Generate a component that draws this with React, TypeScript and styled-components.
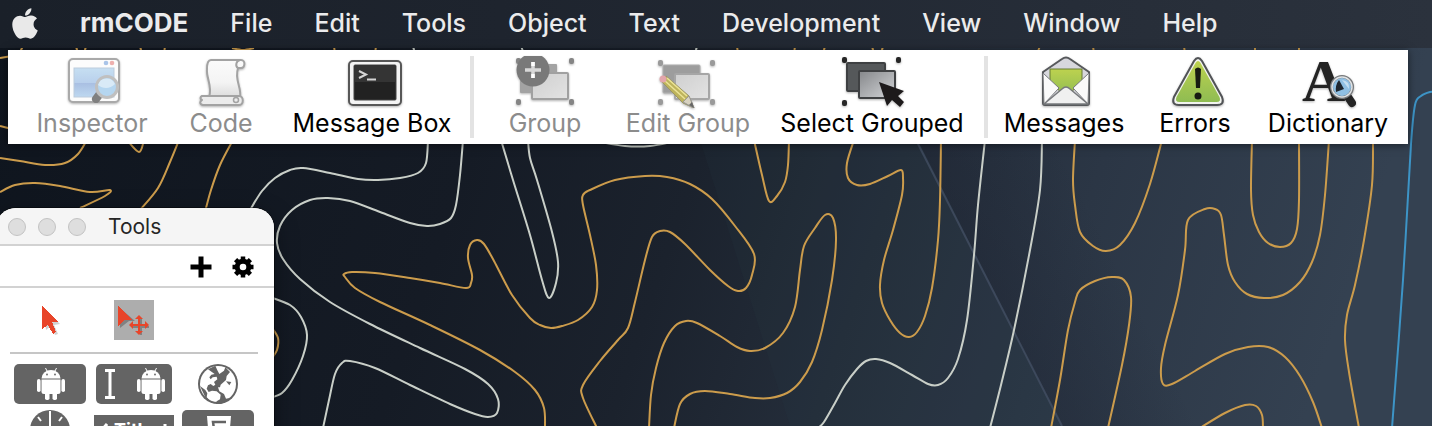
import React from "react";
import styled, { createGlobalStyle, css } from "styled-components";
import { FaApple } from "react-icons/fa";

const Global = createGlobalStyle`
  * { box-sizing: border-box; }
  body { margin: 0; overflow: hidden; background: #10161d; }
  button { font: inherit; color: inherit; background: none; border: 0; padding: 0; cursor: default; }
`;

const Desktop = styled.div`
  position: relative;
  height: 100vh;
  overflow: hidden;
  font-family: Inter, "Liberation Sans", sans-serif;
`;

const Wallpaper = styled.svg`
  position: absolute;
  inset: 0;
  width: 100%;
  height: 100%;
`;

const Layer = styled.div`
  position: relative;
`;

const MenuBar = styled.nav`
  display: flex;
  align-items: center;
  gap: 42px;
  height: 48px;
  padding: 0 12px 2px;
  background: linear-gradient(90deg, #1a2029, #1e242e 35%, #262d38 75%, #2b323d);
  color: #ebebec;
`;

const AppleButton = styled.button`
  display: flex;
  justify-content: center;
  width: 26px;
  font-size: 37px;
  color: #e9e9e9;
`;

const MenuItem = styled.button<{ $app?: boolean }>`
  font-size: ${(p) => (p.$app ? 26 : 25)}px;
  line-height: 32px;
  font-weight: ${(p) => (p.$app ? 700 : 500)};
  white-space: nowrap;
`;

const Toolbar = styled.div`
  display: flex;
  margin: 2px 24px 0 8px;
  padding: 6px 8px;
  height: 94px;
  background: #fff;
  box-shadow: 0 1px 8px rgba(0, 0, 0, 0.5);
`;

const ToolGroup = styled.div`
  display: flex;
  padding: 0 10px;
  & + & { border-left: 4px solid #e3e3e3; }
`;

const ToolButton = styled.button<{ $width: number }>`
  display: flex;
  flex-direction: column;
  align-items: center;
  width: ${(p) => p.$width}px;
  font-size: 25px;
  line-height: 30px;
  color: #000;
  white-space: nowrap;
  &:disabled { color: #8c8c8c; }
`;

const ToolIcon = styled.svg`
  flex: none;
  width: 64px;
  height: 52px;
  filter: drop-shadow(0 1px 1px rgba(0, 0, 0, 0.3));
`;

const Palette = styled.section`
  width: 278px;
  margin: 64px 0 0 -4px;
  padding-left: 4px;
  border-radius: 20px 20px 0 0;
  background: #fff;
  overflow: hidden;
  box-shadow: 0 0 0 1px rgba(0, 0, 0, 0.4), 0 8px 24px rgba(0, 0, 0, 0.4);
`;

const TitleBar = styled.header`
  display: flex;
  align-items: center;
  gap: 12px;
  height: 38px;
  margin-left: -4px;
  padding: 2px 0 0 12px;
  background: #f5f5f5;
  border-bottom: 2px solid #d2d2d2;
`;

const WindowDot = styled.button`
  width: 18px;
  height: 18px;
  border-radius: 50%;
  background: #dedede;
  border: 1px solid #c3c3c3;
`;

const Title = styled.h1`
  margin: 0 0 0 10px;
  font-size: 21px;
  line-height: 28px;
  font-weight: 400;
  color: #262626;
`;

const ActionRow = styled.div`
  display: flex;
  justify-content: flex-end;
  align-items: center;
  gap: 20px;
  height: 42px;
  margin-left: -4px;
  padding: 2px 20px 0 0;
  border-bottom: 2px solid #d2d2d2;
  svg { display: block; width: 22px; height: 22px; }
`;

const IconGrid = styled.div<{ $divided?: boolean }>`
  display: grid;
  grid-template-columns: repeat(3, 84px);
  justify-items: center;
  row-gap: 6px;
  margin: 0 16px 0 10px;
  padding: 10px 0;
  ${(p) => p.$divided && css`
    padding: 12px 0;
    border-bottom: 2px solid #c6c6c6;
  `}
`;

const Cell = styled.button<{ $selected?: boolean }>`
  display: block;
  width: 40px;
  height: 40px;
  margin-left: -4px;
  background: ${(p) => (p.$selected ? "#adadad" : "transparent")};
  svg { display: block; width: 40px; height: 40px; }
`;

const Widget = styled.button<{ $width: number }>`
  display: flex;
  align-items: center;
  justify-content: center;
  gap: 22px;
  width: ${(p) => p.$width}px;
  height: 40px;
  margin-left: -4px;
  padding-left: 2px;
  border-radius: 5px;
  background: #646464;
  svg { display: block; height: 32px; }
`;

const NavWidget = styled.button`
  display: flex;
  align-items: flex-start;
  gap: 6px;
  align-self: end;
  width: 80px;
  height: 35px;
  margin-left: -4px;
  padding: 4px 6px;
  background: #646464;
  color: #fff;
  font-size: 18px;
  line-height: 22px;
  font-weight: 700;
  svg { flex: none; margin-top: 4px; }
`;

type Point = [number, number];

/* Smooth curve through every point of a flat "x,y x,y" list. */
const curve = (list: string) => {
  const p = list.split(" ").map((s) => s.split(",").map(Number) as Point);
  let d = `M${p[0]}`;
  for (let i = 0; i < p.length - 1; i++) {
    const a = p[i - 1] ?? p[i];
    const b = p[i];
    const c = p[i + 1];
    const e = p[i + 2] ?? c;
    d += `C${b[0] + (c[0] - a[0]) / 6},${b[1] + (c[1] - a[1]) / 6} ${c[0] - (e[0] - b[0]) / 6},${c[1] - (e[1] - b[1]) / 6} ${c}`;
  }
  return d;
};

const paleLines = [
  "250,210 262,191 275,178 290,170 303,168 330,173 358,179 378,180 400,178 418,173 426,163 428,140",
  "463,140 460,175 456,205 451,218 440,224 427,226 410,223 380,212 350,201 328,198 310,200 292,210 280,226 277,243 283,259 300,279 330,302 370,324 420,348 465,369 488,384 498,399 497,413 488,417 475,414 450,404 410,385 375,368 350,361 342,363 335,374 329,400 323,428",
  "501,140 513,180 530,235 542,280 549,298 556,283 558,262 552,232 537,180 530,158 528,140",
  "270,297 290,305 301,317 307,335 303,356 292,380 282,393 270,398",
  "600,142 625,146 650,146 672,142",
  "818,428 824,422 835,403 845,385 857,369 866,361 876,359 890,363 912,375 928,384 938,385 948,378 958,359 967,320 974,255 978,205 985,140",
  "1042,140 1040,190 1030,250 1014,330 1001,385 990,428",
  "413,46 415,54",
  "521,46 524,54",
  "697,46 695,54",
];

const goldLines = [
  "272,328 278,338 277,350 272,358",
  "545,428 544,408 535,390 515,372 480,350 430,325 380,302 355,288 345,277 344,274 352,272 375,273 410,278 440,283 466,288 471,283 472,275 468,258 470,245 477,240 484,244 494,261 512,295 530,318 540,325 551,328 562,326 578,320 592,307 597,290 596,265 590,235 583,205 583,195 590,190 615,180 645,176 667,177 690,184 712,199 735,226 754,254 752,275 746,288 738,291 728,286 710,270 685,244 670,232 660,231 652,237 645,260 635,302 628,328 618,340 600,361 583,385 583,398 597,428",
  "649,428 651,395 656,368 664,343 675,326 686,321 697,323 720,336 737,347 750,351 765,348 783,333 795,307 800,270 804,246 815,228 825,215 833,218 836,240 832,280 822,330 812,362 800,382 787,393 770,398 755,398 730,394 705,391 690,394 680,404 674,428",
  "754,140 762,175 769,201 777,196 785,182 788,165 789,140",
  "854,140 847,163 848,178 857,185 870,184 888,176 901,170 903,178 902,195 893,230 884,260 880,285 882,303 890,320 900,333 909,337 917,332 925,316 932,288 938,240 940,200 941,140",
  "1075,140 1073,180 1075,205 1080,232 1093,246 1106,251 1120,245 1135,223 1150,184 1162,140",
  "1051,428 1060,380 1068,330 1075,302 1080,290 1095,281 1112,277 1124,280 1131,297 1129,325 1122,365 1108,428",
  "1252,140 1251,190 1253,215 1259,232 1268,243 1280,247 1291,243 1297,229 1299,200 1299,140",
  "1329,140 1325,195 1320,235 1312,262 1300,282 1283,295 1264,298 1247,294 1235,282 1228,265 1224,235 1221,215 1215,209 1205,209 1188,220 1185,250 1178,295 1165,345 1161,368 1163,384 1172,384 1195,371 1225,354 1248,347 1268,347 1285,357 1300,376 1313,402 1322,428",
  "1373,140 1372,185 1364,240 1355,285 1347,315 1345,340 1349,372 1359,428",
  "1200,428 1225,413 1245,405 1256,406 1262,415 1263,428",
  "0,158 20,161 45,165 65,163 78,154 87,140",
  "0,192 15,185 35,183 60,186 90,192 110,190 105,196 80,208",
  "127,140 139,152 144,140",
  "179,140 170,162 158,188 140,210",
  "233,140 220,165 211,190 205,212",
  "0,58 12,56",
  "0,126 12,129",
  "23,46 19,54", "76,46 78,54", "86,46 84,54", "140,46 142,54", "165,46 164,54",
  "232,48 243,50 254,48", "334,46 335,54", "376,46 375,54", "737,46 738,54", "795,46 794,54",
  "825,46 823,54", "872,46 874,54", "883,46 881,54", "1040,46 1037,54", "1093,46 1094,54",
  "1184,46 1185,54", "1255,46 1255,54", "1299,46 1299,54",
];

const Backdrop = () => (
  <Wallpaper viewBox="0 0 1432 426" preserveAspectRatio="xMinYMin slice" aria-hidden="true">
    <defs>
      <linearGradient id="sky" x1="0" y1="0" x2="1" y2="0.1">
        <stop offset="0" stopColor="#0f151e" />
        <stop offset="0.36" stopColor="#151b25" />
        <stop offset="0.52" stopColor="#1b222d" />
        <stop offset="0.66" stopColor="#242d3a" />
        <stop offset="0.8" stopColor="#2b3645" />
        <stop offset="1" stopColor="#344151" />
      </linearGradient>
      <linearGradient id="wedge" gradientUnits="userSpaceOnUse" x1="990" y1="283" x2="1100" y2="228">
        <stop offset="0" stopColor="#1c2230" stopOpacity="0.35" />
        <stop offset="1" stopColor="#1c2230" stopOpacity="0" />
      </linearGradient>
    </defs>
    <rect width="1432" height="426" fill="url(#sky)" />
    <path d="M700 140L790 426H1062L918 140Z" fill="#28404a" opacity="0.12" />
    <path d="M918 140L1062 426H1240V140Z" fill="url(#wedge)" />
    <path d="M916 140L1062 426" stroke="#48546a" strokeWidth="2" opacity="0.65" />
    <g fill="none" strokeWidth="2" strokeLinejoin="round">
      <g stroke="#c9cfc8">{paleLines.map((l) => <path key={l} d={curve(l)} />)}</g>
      <g stroke="#cc9c4c">{goldLines.map((l) => <path key={l} d={curve(l)} />)}</g>
      <path stroke="#3d94c6" d={curve("1436,92 1430,92 1421,96 1415,105 1411,144 1403,280 1392,428")} />
    </g>
  </Wallpaper>
);

const InspectorIcon = () => (
  <ToolIcon viewBox="0 0 64 52">
    <defs>
      <linearGradient id="pane" x1="0" y1="0" x2="0" y2="1">
        <stop offset="0" stopColor="#c6dff2" /><stop offset="0.5" stopColor="#b9d0ec" />
        <stop offset="0.52" stopColor="#a9bfe2" /><stop offset="1" stopColor="#bed8f0" />
      </linearGradient>
    </defs>
    <rect x="9" y="3" width="50" height="43" rx="4" fill="#fcfcfc" stroke="#a9a9a9" strokeWidth="2" />
    <rect x="14" y="12" width="40" height="29" fill="url(#pane)" stroke="#bccbdc" />
    <circle cx="46" cy="7" r="2.3" fill="#a9c4e8" /><circle cx="52" cy="7" r="2.3" fill="#eeb0ae" />
    <path d="M39 39L36 43" stroke="#808080" strokeWidth="8" strokeLinecap="round" />
    <circle cx="47" cy="31" r="10.5" fill="#b5d6f0" stroke="#c0c0c0" strokeWidth="3" />
    <path d="M38 29a9 9 0 0 1 17-1c-5 5-12 5-17 1z" fill="#d9eaf7" />
  </ToolIcon>
);

const CodeIcon = () => (
  <ToolIcon viewBox="0 0 64 52">
    <defs>
      <linearGradient id="paper" x1="0" y1="0" x2="0" y2="1">
        <stop offset="0" stopColor="#fbfbfb" /><stop offset="0.6" stopColor="#f4f4f4" /><stop offset="1" stopColor="#dcdcdc" />
      </linearGradient>
    </defs>
    <g stroke="#a3a3a3" strokeWidth="2" strokeLinejoin="round">
      <path d="M22 4h30c5 0 4 8 0 8h-3c-4 12 4 20 2 29H20c4-10-3-19-2-28 0-5 1-9 4-9z" fill="url(#paper)" />
      <path d="M49 12c-3-2-2-7 2-8" fill="none" />
      <path d="M13 40h37c5 0 5 9 0 9H14c-4-1-3-4-1-5-2-1-2-3 0-4z" fill="#ececec" />
      <circle cx="47" cy="44" r="2.5" fill="none" strokeWidth="1.5" />
    </g>
  </ToolIcon>
);

const MessageBoxIcon = () => (
  <ToolIcon viewBox="0 0 64 52">
    <rect x="9" y="5" width="52" height="44" rx="4" fill="#f4f4f4" stroke="#575757" strokeWidth="2" />
    <rect x="14" y="9" width="42" height="35" rx="1" fill="#222" stroke="#444" />
    <path d="M15 10h40v16H15z" fill="#343434" />
    <path d="M19 15l7 3.500-7 3.500M27 23.500h9" fill="none" stroke="#d4d4d4" strokeWidth="2" />
  </ToolIcon>
);

const Shades = () => (
  <defs>
    <linearGradient id="slab" x1="0" y1="0" x2="1" y2="1">
      <stop offset="0" stopColor="#85878a" /><stop offset="1" stopColor="#d3d5d8" />
    </linearGradient>
    <linearGradient id="paleSlab" x1="0" y1="0" x2="1" y2="1">
      <stop offset="0" stopColor="#cfcfcf" /><stop offset="1" stopColor="#e3e3e3" />
    </linearGradient>
  </defs>
);

const Handles = ({ at, fill }: { at: Point[]; fill: string }) => (
  <g fill={fill}>{at.map(([x, y]) => <rect key={`${x} ${y}`} x={x - 2} y={y - 3} width="5" height="6" rx="2" />)}</g>
);

const GroupIcon = () => (
  <ToolIcon viewBox="0 0 64 52">
    <Shades />
    <Handles fill="#858585" at={[[5, 5], [58, 5], [5, 46], [58, 46]]} />
    <rect x="7" y="8" width="37" height="29" rx="1" fill="#a3a3a3" />
    <rect x="19" y="17" width="36" height="26" rx="1" fill="url(#paleSlab)" stroke="#a0a0a0" strokeWidth="2" />
    <circle cx="20" cy="14" r="16.500" fill="#797979" />
    <path d="M20 6v16M12 14h16" stroke="#d8d8d8" strokeWidth="3.500" />
    <path d="M20 6v4M20 18v4" stroke="#fff" strokeWidth="3.500" />
  </ToolIcon>
);

const EditGroupIcon = () => (
  <ToolIcon viewBox="0 0 64 52">
    <Handles fill="#9a9a9a" at={[[4, 7], [56, 7], [4, 46], [56, 46]]} />
    <rect x="7" y="9" width="37" height="28" rx="1" fill="#9d9d9d" stroke="#b0b0b0" />
    <rect x="19" y="18" width="34" height="25" rx="1" fill="url(#paleSlab)" stroke="#a6a6a6" strokeWidth="2" />
    <path d="M5 25l5-5 23 20 5 12-11-5z" fill="#bdb35c" stroke="#9a9567" />
    <path d="M8 24l21 19M11 22l20 18" stroke="#ebe396" strokeWidth="1.500" />
    <path d="M27 46l6-6 5 12z" fill="#d8d2c0" stroke="#999" /><path d="M33 49l3-3 2 6z" fill="#666" />
    <circle cx="7" cy="23" r="3.500" fill="#e3a5ab" />
  </ToolIcon>
);

const SelectGroupedIcon = () => (
  <ToolIcon viewBox="0 0 64 52" overflow="visible">
    <Handles fill="#262626" at={[[4, 4], [58, 4], [4, 47]]} />
    <rect x="7" y="7" width="38" height="28" rx="1" fill="#55585a" stroke="#3e4042" strokeWidth="2" />
    <rect x="19" y="15" width="36" height="27" rx="1" fill="url(#slab)" stroke="#3f4143" strokeWidth="2" />
    <path d="M39 26l25 9-6 5 6 6-4 5-8-7-5 6z" fill="#1d1a1b" />
  </ToolIcon>
);

const MessagesIcon = () => (
  <ToolIcon viewBox="0 0 64 52">
    <defs>
      <linearGradient id="leaf" x1="0" y1="0" x2="0" y2="1">
        <stop offset="0" stopColor="#bdd24f" /><stop offset="1" stopColor="#8fbc52" />
      </linearGradient>
    </defs>
    <path d="M11 16L30 3q4-3 8 0l19 13v31q0 2-2 2H13q-2 0-2-2z" fill="#d7d7dd" stroke="#57595c" strokeWidth="2" strokeLinejoin="round" />
    <path d="M18 13h32v14L34 40 18 27z" fill="url(#leaf)" stroke="#667a35" />
    <path d="M11 17l16 15-15 16zM57 17L41 32l15 16z" fill="#fafafa" stroke="#77797c" />
    <path d="M12 48l18-15q4-4 8 0l18 15z" fill="#f0f0f0" stroke="#77797c" strokeWidth="1.500" strokeLinejoin="round" />
  </ToolIcon>
);

const ErrorsIcon = () => (
  <ToolIcon viewBox="0 0 64 52">
    <path d="M31 5q4-6 8 0l20 36q3 8-5 8H16q-8 0-5-8z" fill="#f2f4ef" stroke="#515356" strokeWidth="2" />
    <path d="M32.500 7q2.500-4 5 0l19 34q2 5-3 5h-37q-5 0-3-5z" fill="url(#leaf)" />
    <path d="M32 13q3-3 6 0l-1 19h-4z" fill="#171b12" /><circle cx="35" cy="40" r="3.500" fill="#171b12" />
  </ToolIcon>
);

const DictionaryIcon = () => (
  <ToolIcon viewBox="0 0 64 52">
    <text x="6" y="45" fontFamily="Liberation Serif, serif" fontWeight="700" fontSize="60" fill="#242424">A</text>
    <path d="M52 41l4 6" stroke="#242424" strokeWidth="8" strokeLinecap="round" />
    <circle cx="46" cy="31" r="10.500" fill="#8fbfe3" stroke="#77797b" strokeWidth="3" />
    <circle cx="46" cy="31" r="10" fill="none" stroke="#dfe3e6" strokeWidth="1.500" />
    <path d="M43 24l5 9-8 3q-1-7 3-12z" fill="#1f2730" /><path d="M46 24q8 1 7 9z" fill="#c4def1" />
  </ToolIcon>
);

const tools = [
  [
    { label: "Inspector", width: 132, off: true, Icon: InspectorIcon },
    { label: "Code", width: 126, off: true, Icon: CodeIcon },
    { label: "Message Box", width: 176, off: false, Icon: MessageBoxIcon },
  ],
  [
    { label: "Group", width: 122, off: true, Icon: GroupIcon },
    { label: "Edit Group", width: 164, off: true, Icon: EditGroupIcon },
    { label: "Select Grouped", width: 204, off: false, Icon: SelectGroupedIcon },
  ],
  [
    { label: "Messages", width: 132, off: false, Icon: MessagesIcon },
    { label: "Errors", width: 130, off: false, Icon: ErrorsIcon },
    { label: "Dictionary", width: 136, off: false, Icon: DictionaryIcon },
  ],
];

const Android = () => (
  <svg viewBox="0 0 28 32" width="28" height="32" fill="#fff">
    <path d="M8.500 0l2 4M19.500 0l-2 4" stroke="#fff" />
    <path d="M4.500 10.500a9.500 8.500 0 0 1 19 0z" />
    <circle cx="10" cy="6.500" r="0.900" fill="#646464" /><circle cx="18" cy="6.500" r="0.900" fill="#646464" />
    <path d="M4.500 11.500h19v12q0 2.500-2.500 2.500h-14q-2.500 0-2.500-2.500z" />
    <rect x="0" y="11" width="3.600" height="13" rx="1.800" /><rect x="24.400" y="11" width="3.600" height="13" rx="1.800" />
    <rect x="8" y="22" width="4.500" height="10" rx="1.800" /><rect x="15.500" y="22" width="4.500" height="10" rx="1.800" />
  </svg>
);

const teeth = [0, 45, 90, 135];

export default function App() {
  return (
    <Desktop>
      <Global />
      <Backdrop />
      <Layer>
        <MenuBar aria-label="Menu bar">
          <AppleButton aria-label="Apple menu"><FaApple /></AppleButton>
          {["rmCODE", "File", "Edit", "Tools", "Object", "Text", "Development", "View", "Window", "Help"].map((m, i) => (
            <MenuItem key={m} $app={i === 0}>{m}</MenuItem>
          ))}
        </MenuBar>
        <Toolbar role="toolbar">
          {tools.map((group) => (
            <ToolGroup key={group[0].label}>
              {group.map(({ label, width, off, Icon }) => (
                <ToolButton key={label} $width={width} disabled={off}><Icon />{label}</ToolButton>
              ))}
            </ToolGroup>
          ))}
        </Toolbar>
        <Palette aria-label="Tools palette">
          <TitleBar>
            <WindowDot aria-label="Close" /><WindowDot aria-label="Minimize" /><WindowDot aria-label="Zoom" />
            <Title>Tools</Title>
          </TitleBar>
          <ActionRow>
            <button aria-label="Add">
              <svg viewBox="0 0 22 22"><path d="M11 0.500v21M0.500 11h21" stroke="#000" strokeWidth="5" strokeLinejoin="round" /></svg>
            </button>
            <button aria-label="Settings">
              <svg viewBox="0 0 22 22">
                <circle cx="11" cy="11" r="5.800" fill="none" stroke="#000" strokeWidth="5" />
                {teeth.map((a) => (
                  <path key={a} d="M11 0.500v4M11 17.500v4" stroke="#000" strokeWidth="4.500" transform={`rotate(${a} 11 11)`} />
                ))}
              </svg>
            </button>
          </ActionRow>
          <IconGrid $divided>
            <Cell aria-label="Browse tool">
              <svg viewBox="0 0 40 40">
                <path d="M14 8l16 16-6 1 4 9-3 1-4-9-5 4z" fill="#000" opacity="0.18" />
                <path d="M12 6l16 16h-6l4 10-3 2-5-9-6 4z" fill="#e8452a" shapeRendering="crispEdges" />
              </svg>
            </Cell>
            <Cell $selected aria-label="Pointer tool">
              <svg viewBox="0 0 40 40">
                <path d="M6 8l15 13H15l-9 7z" fill="#000" opacity="0.25" />
                <path d="M4 6l14 14h-7l-7 6z" fill="#e8452a" shapeRendering="crispEdges" />
                <g transform="translate(2 2)" opacity="0.25"><path d="M25 17v16M17 25h16" stroke="#000" strokeWidth="2" /></g>
                <path d="M25 17v16M17 25h16" stroke="#e8452a" strokeWidth="2" />
                <path d="M25 15l4 4h-8zM25 35l4-4h-8zM15 25l4-4v8zM35 25l-4-4v8z" fill="#e8452a" />
              </svg>
            </Cell>
          </IconGrid>
          <IconGrid>
            <Widget $width={72} aria-label="Android button"><Android /></Widget>
            <Widget $width={76} aria-label="Android field">
              <svg viewBox="0 0 10 32" width="10"><path d="M0 2.500h10M0 29.500h10M5 2v28" stroke="#fff" strokeWidth="3" /></svg>
              <Android />
            </Widget>
            <Cell aria-label="Browser">
              <svg viewBox="0 0 120 120">
                <circle cx="60" cy="60" r="60" fill="#646464" />
                <circle cx="60" cy="60" r="54" fill="#fff" />
                <path d="M30 16L52 5l6 14 6 11 14-10 4-10 14 14-10 12-2 12-16 14-2 8-6 0 4 12 14 8 6 14 10-2-6 8-24 12-12 2 4-12 10-6 2-14-12-10-14-2-10 4-6-10 4-10 8-4 8 6 6-4-4-8 10-8-2-8-12 2-6 6-4-6 6-8 10-2z" fill="#646464" />
                <path d="M6 66l16 12 6 10-2 12 12 12-14-8z" fill="#646464" />
                <path d="M100 54l-6 10-10-12z" fill="#646464" />
              </svg>
            </Cell>
            <Cell aria-label="Clock">
              <svg viewBox="0 0 40 40">
                <circle cx="20" cy="20" r="20" fill="#646464" />
                <path d="M20 1v19M8 7l3 4M32 7l-3 4M2 20h4M34 20h4" stroke="#fff" strokeWidth="2" />
              </svg>
            </Cell>
            <NavWidget aria-label="Navigation bar">
              <svg width="8" height="16" viewBox="0 0 8 16"><path d="M7 1L1 8l6 7" fill="none" stroke="#fff" strokeWidth="3" /></svg>
              <span>Title</span>
              <svg width="12" height="14" viewBox="0 0 12 14"><path d="M6 1v12M0 7h12" stroke="#fff" strokeWidth="3" /></svg>
            </NavWidget>
            <Widget $width={72} aria-label="HTML widget">
              <svg viewBox="0 0 24 28" width="24">
                <path d="M0 0h24l-2 24-10 4-10-4z" fill="#fff" />
                <path d="M19 6H6l1 7h10l-1 7-4 1-5-1" fill="none" stroke="#646464" strokeWidth="2.500" />
              </svg>
            </Widget>
          </IconGrid>
        </Palette>
      </Layer>
    </Desktop>
  );
}
